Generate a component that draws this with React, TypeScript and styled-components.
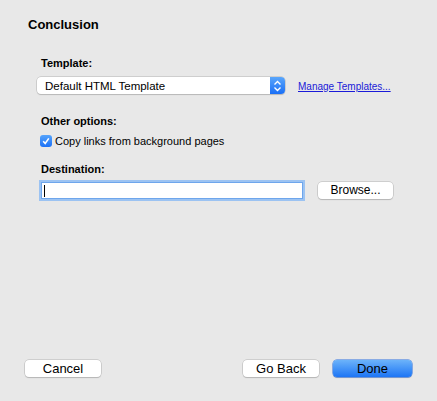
import React from "react";
import styled, { createGlobalStyle } from "styled-components";

const Global = createGlobalStyle`
  html, body { margin: 0; padding: 0; background: #e8e8e8; }
  body { font-family: "Liberation Sans", Arial, sans-serif; color: #000; }
`;

const Page = styled.div`
  width: 437px;
  height: 401px;
  box-sizing: border-box;
  background: #e8e8e8;
  display: flex;
  flex-direction: column;
  padding: 17px 25px 24px 25px;
`;

const Title = styled.h1`
  margin: 0 0 0 3px;
  font-size: 13px;
  line-height: 16px;
  font-weight: bold;
`;

const Body = styled.div`
  display: flex;
  flex-direction: column;
  padding-left: 12px;
  flex: 1;
`;

const Label = styled.div<{ $top: number }>`
  margin: ${(p) => p.$top}px 0 0 4px;
  font-size: 11px;
  line-height: 14px;
  font-weight: bold;
`;

const Row = styled.div<{ $top: number }>`
  display: flex;
  align-items: center;
  margin-top: ${(p) => p.$top}px;
`;

const Select = styled.div`
  width: 248px;
  height: 17px;
  box-sizing: border-box;
  background: #fff;
  border-radius: 4px;
  box-shadow: 0 0 0 0.5px #b4b4b4, 0 1px 1px rgba(0, 0, 0, 0.18);
  display: flex;
  align-items: center;
  font-size: 11.5px;
  padding-left: 8px;
  overflow: hidden;
`;

const SelectText = styled.span`
  flex: 1;
`;

const Stepper = styled.div`
  width: 15px;
  height: 17px;
  background: linear-gradient(#5aa6fb, #1a6ff6);
  display: flex;
  align-items: center;
  justify-content: center;
`;

const Link = styled.a`
  margin-left: 13px;
  font-size: 10px;
  color: #1a1ad8;
  text-decoration: underline;
  margin-top: 1px;
`;

const Check = styled.div`
  width: 12px;
  height: 12px;
  margin-left: 3px;
  border-radius: 3px;
  background: linear-gradient(#55a3fb, #1c71f6);
  display: flex;
  align-items: center;
  justify-content: center;
`;

const CheckLabel = styled.span`
  margin-left: 3px;
  font-size: 11px;
`;

const Input = styled.div`
  width: 258px;
  height: 15px;
  margin-left: 4px;
  background: #fff;
  border: 1px solid #6ea6ec;
  box-shadow: 0 0 0 2px #9cc3f2;
  display: flex;
  align-items: center;
  padding-left: 2px;
  box-sizing: content-box;
`;

const Caret = styled.div`
  width: 1px;
  height: 12px;
  background: #000;
`;

const Button = styled.button<{ $w: number; $primary?: boolean; $size?: number; $left?: number }>`
  width: ${(p) => p.$w}px;
  height: 17px;
  padding: 0;
  margin-left: ${(p) => p.$left ?? 0}px;
  font-family: "Liberation Sans", Arial, sans-serif;
  font-size: ${(p) => p.$size ?? 13}px;
  line-height: 17px;
  color: #000;
  border: none;
  border-radius: 4px;
  background: ${(p) => (p.$primary ? "linear-gradient(#6cb3fa, #1d75f5)" : "#fff")};
  box-shadow: ${(p) =>
    p.$primary
      ? "0 0 0 0.5px #2a6fe0, 0 1px 1px rgba(0,0,0,0.2)"
      : "0 0 0 0.5px #b4b4b4, 0 1px 1px rgba(0,0,0,0.2)"};
`;

const Footer = styled.div`
  display: flex;
  align-items: center;
  gap: 14px;
`;

const Spacer = styled.div`
  flex: 1;
`;

export default function App() {
  return (
    <>
      <Global />
      <Page>
        <Title>Conclusion</Title>
        <Body>
          <Label $top={23}>Template:</Label>
          <Row $top={7}>
            <Select>
              <SelectText>Default HTML Template</SelectText>
              <Stepper>
                <svg width="9" height="12" viewBox="0 0 9 12">
                  <path d="M1.5 4.5 L4.5 1.5 L7.5 4.5 M1.5 7.5 L4.5 10.5 L7.5 7.5" fill="none" stroke="#fff" strokeWidth="1.4" />
                </svg>
              </Stepper>
            </Select>
            <Link href="#">Manage Templates...</Link>
          </Row>
          <Label $top={20}>Other options:</Label>
          <Row $top={7}>
            <Check>
              <svg width="10" height="10" viewBox="0 0 10 10">
                <path d="M2.2 5.3 L4.2 7.5 L7.8 2.4" fill="none" stroke="#fff" strokeWidth="1.6" />
              </svg>
            </Check>
            <CheckLabel>Copy links from background pages</CheckLabel>
          </Row>
          <Label $top={15}>Destination:</Label>
          <Row $top={6}>
            <Input>
              <Caret />
            </Input>
            <Button $w={75} $size={12} $left={15}>Browse...</Button>
          </Row>
          <Spacer />
        </Body>
        <Footer>
          <Button $w={76}>Cancel</Button>
          <Spacer />
          <Button $w={76}>Go Back</Button>
          <Button $w={79} $primary>Done</Button>
        </Footer>
      </Page>
    </>
  );
}
